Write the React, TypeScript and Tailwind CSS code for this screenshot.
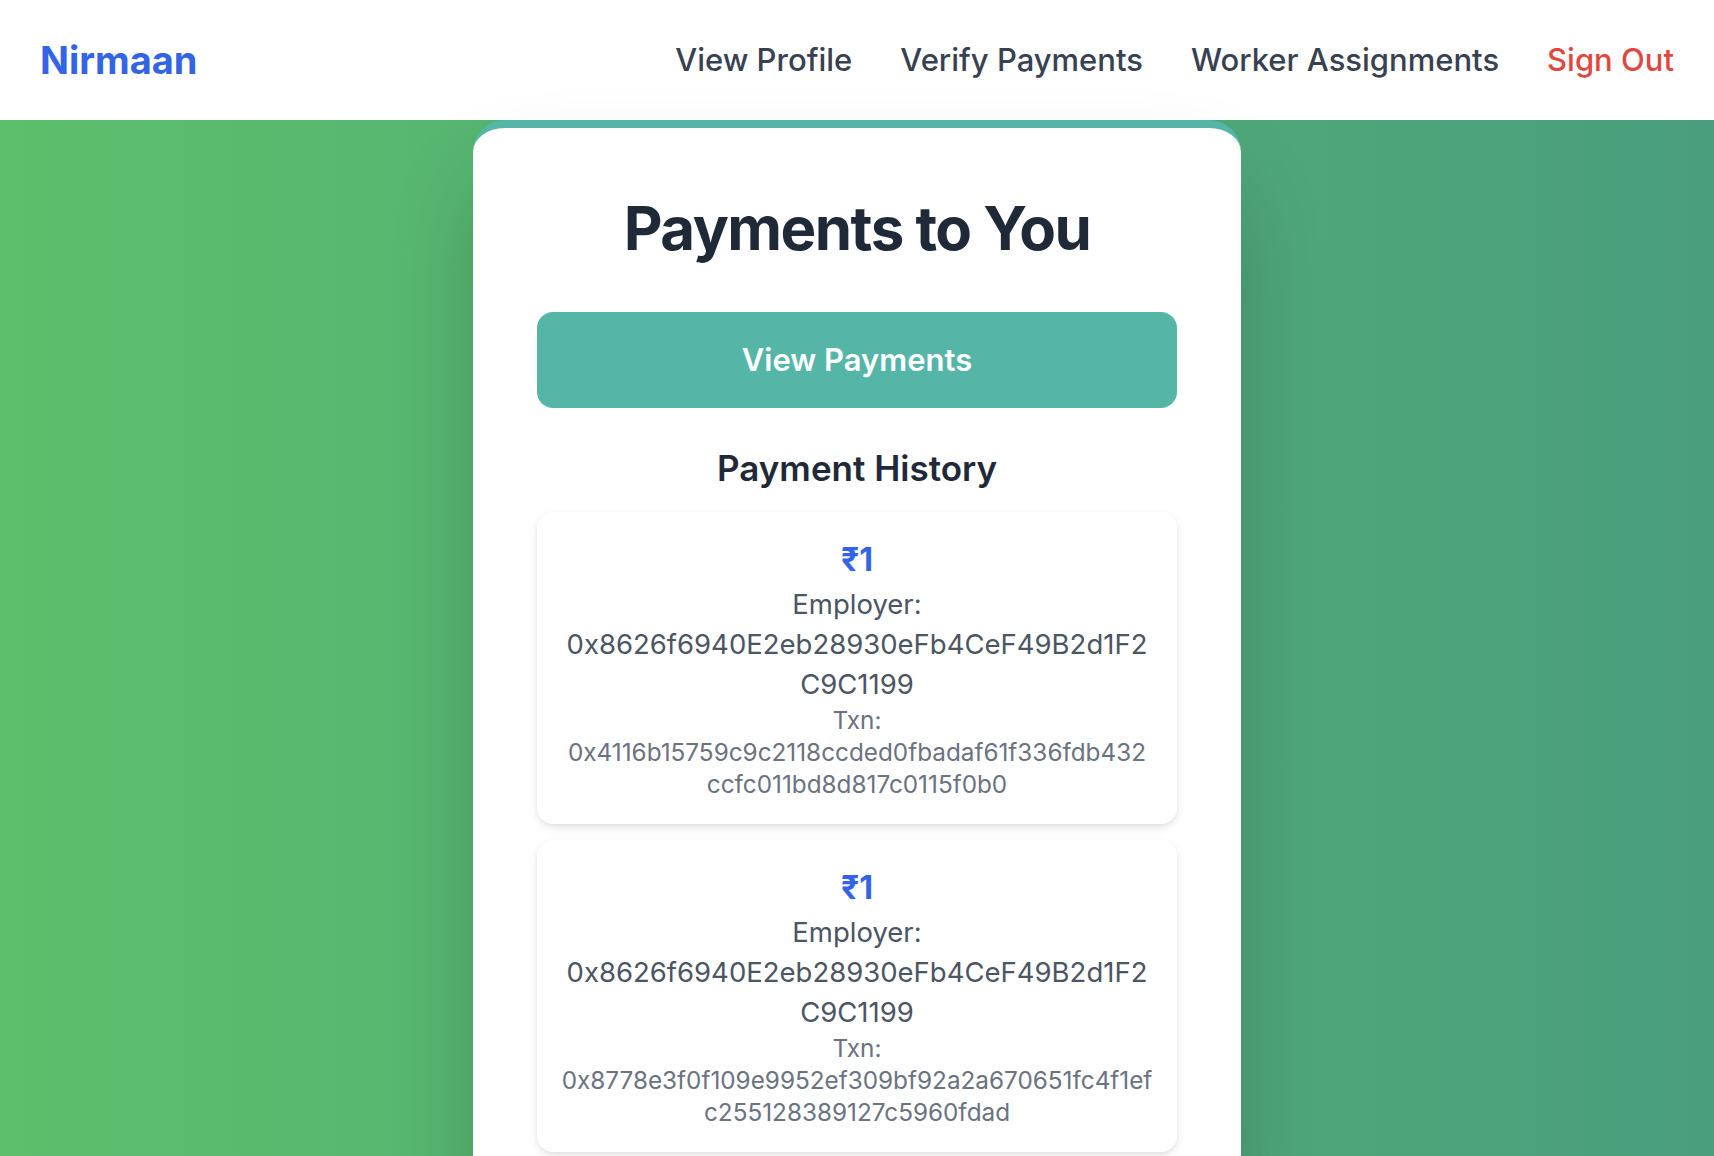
const payments = [
  {
    amount: "₹1",
    employer: ["0x8626f6940E2eb28930eFb4CeF49B2d1F2", "C9C1199"],
    txn: ["0x4116b15759c9c2118ccded0fbadaf61f336fdb432", "ccfc011bd8d817c0115f0b0"],
  },
  {
    amount: "₹1",
    employer: ["0x8626f6940E2eb28930eFb4CeF49B2d1F2", "C9C1199"],
    txn: ["0x8778e3f0f109e9952ef309bf92a2a670651fc4f1ef", "c255128389127c5960fdad"],
  },
];

function Navbar() {
  return (
    <nav className="relative z-10 flex h-[120px] items-center justify-between bg-white px-[40px]">
      <div className="text-[38px] font-bold text-[#3464e6]">Nirmaan</div>
      <div className="flex items-center gap-[48px] text-[31px] font-medium text-[#374151]">
        <a href="#">View Profile</a>
        <a href="#">Verify Payments</a>
        <a href="#">Worker Assignments</a>
        <a href="#" className="text-[#e1463f]">
          Sign Out
        </a>
      </div>
    </nav>
  );
}

function PaymentCard({ p }: { p: (typeof payments)[number] }) {
  return (
    <div className="rounded-[16px] bg-white p-[24px] text-center shadow-[0_4px_12px_-2px_rgba(0,0,0,0.12),0_2px_6px_-2px_rgba(0,0,0,0.08)]">
      <p className="text-[32px] leading-[48px] font-bold text-[#3464e6]">{p.amount}</p>
      <p className="text-[27.5px] leading-[40px] text-[#4b5563]">
        Employer:
        <br />
        {p.employer[0]}
        <br />
        {p.employer[1]}
      </p>
      <p className="text-[24.3px] leading-[32px] text-[#6b7280]">
        Txn:
        <br />
        {p.txn[0]}
        <br />
        {p.txn[1]}
      </p>
    </div>
  );
}

export default function App() {
  return (
    <div className="min-h-screen bg-linear-to-r from-[#5cbf6b] to-[#4a9e7d] font-['Inter',sans-serif]">
      <Navbar />
      <main className="flex justify-center">
        <div className="relative z-20 w-[768px] rounded-[32px] border-t-[8px] border-[#55b6a8] bg-white p-[64px] shadow-[0_50px_100px_-24px_rgba(0,0,0,0.3)]">
          <h1 className="text-center text-[60px] leading-[72px] font-bold tracking-[-0.025em] text-[#1f2937]">
            Payments to You
          </h1>
          <button className="mt-[48px] flex h-[96px] w-full items-center justify-center rounded-[16px] bg-[#55b6a8] text-[31px] font-semibold text-white">
            View Payments
          </button>
          <h2 className="mt-[32px] mb-[16px] text-center text-[35px] leading-[56px] font-semibold text-[#1f2937]">
            Payment History
          </h2>
          <div className="flex flex-col gap-[16px]">
            {payments.map((p, i) => (
              <PaymentCard key={i} p={p} />
            ))}
          </div>
        </div>
      </main>
    </div>
  );
}
